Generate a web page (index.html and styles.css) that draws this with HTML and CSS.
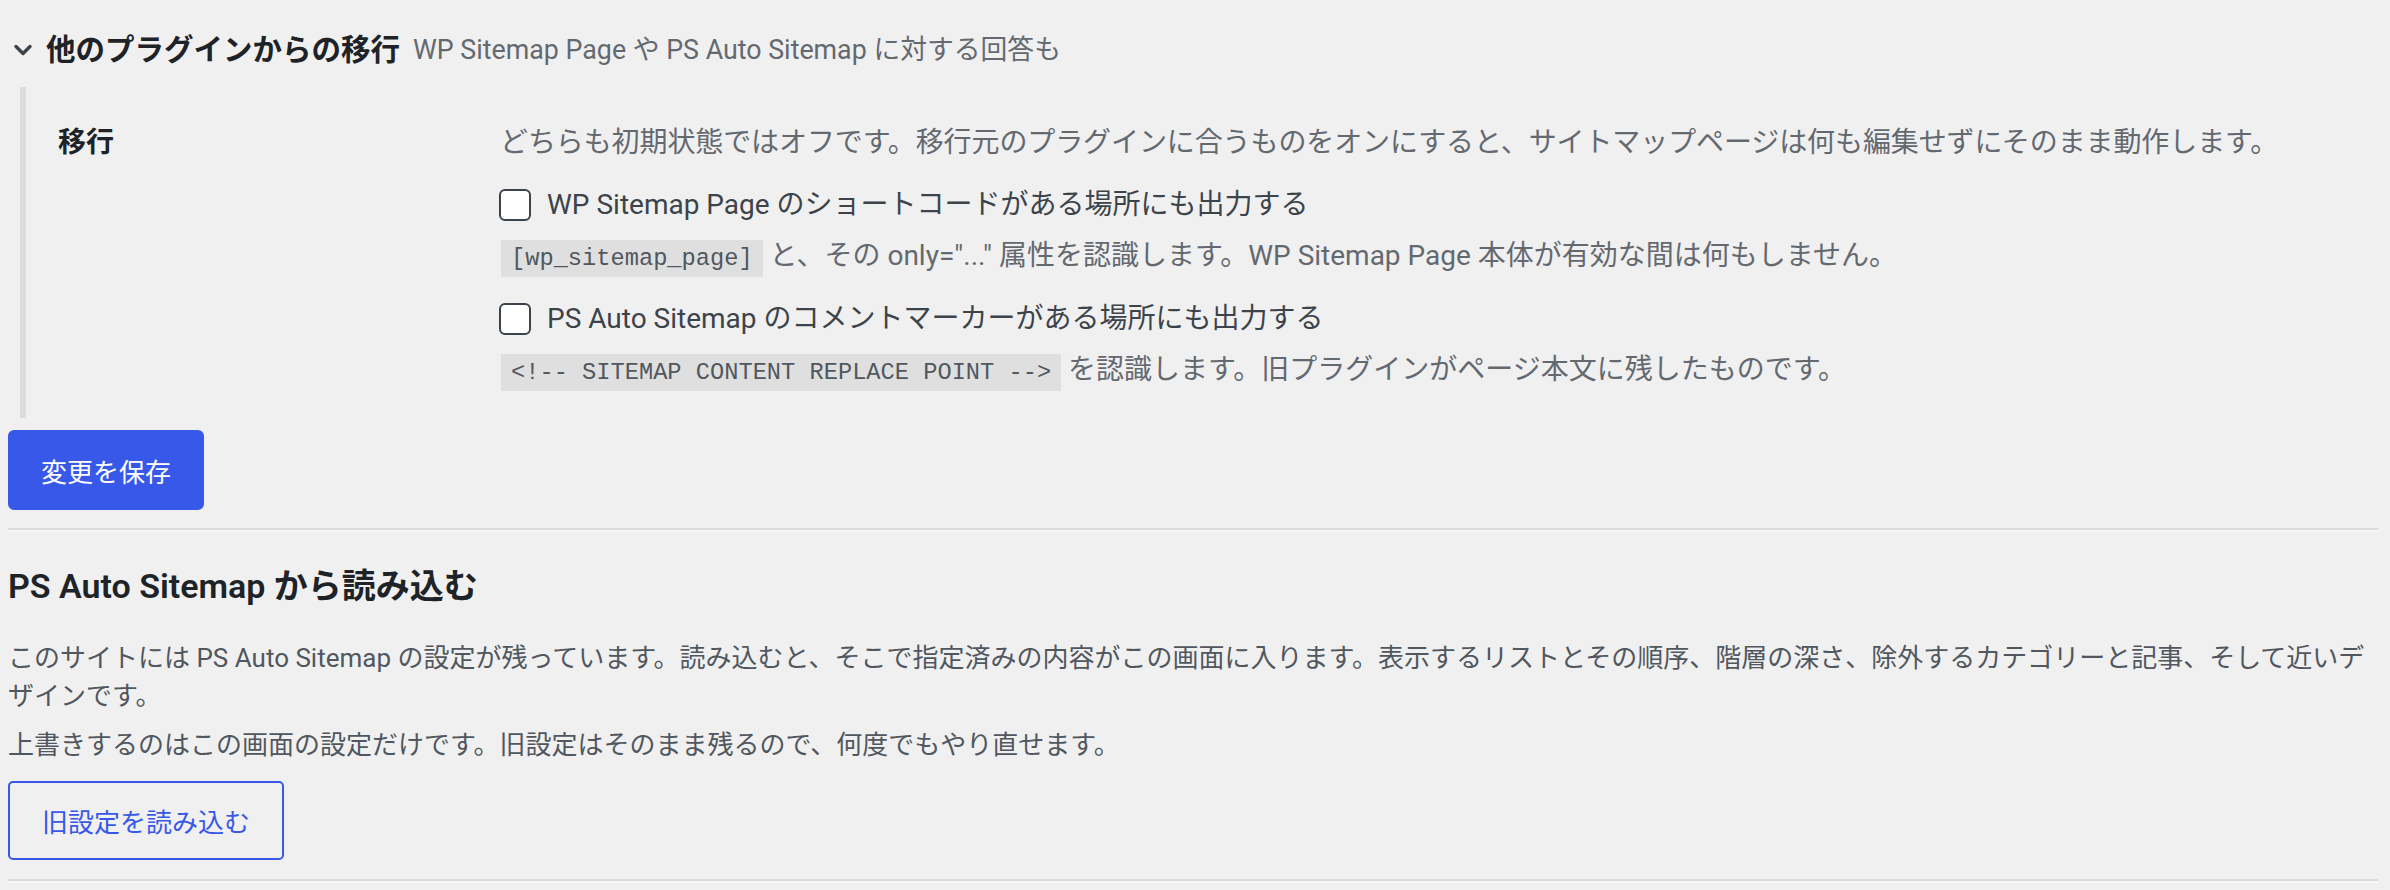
FILE: index.html
```html
<!DOCTYPE html>
<html lang="ja">
<head>
<meta charset="utf-8">
<title>移行設定</title>
<link rel="stylesheet" href="styles.css">
</head>
<body>
<div class="wrap">
  <div class="summary">
    <svg class="chev" width="20" height="14" viewBox="0 0 20 14" aria-hidden="true"><polyline points="3,3.5 10,10.5 17,3.5" fill="none" stroke="#3c434a" stroke-width="3.4" stroke-linecap="round" stroke-linejoin="round"/></svg>
    <span class="summary-title">他のプラグインからの移行</span>
    <span class="summary-sub">WP Sitemap Page や PS Auto Sitemap に対する回答も</span>
  </div>

  <div class="box">
    <div class="th">移行</div>
    <div class="td">
      <p class="desc">どちらも初期状態ではオフです。移行元のプラグインに合うものをオンにすると、サイトマップページは何も編集せずにそのまま動作します。</p>
      <label class="check"><input type="checkbox"><span>WP Sitemap Page のショートコードがある場所にも出力する</span></label>
      <p class="note"><code>[wp_sitemap_page]</code> と、その only="..." 属性を認識します。WP Sitemap Page 本体が有効な間は何もしません。</p>
      <label class="check second"><input type="checkbox"><span>PS Auto Sitemap のコメントマーカーがある場所にも出力する</span></label>
      <p class="note"><code>&lt;!-- SITEMAP CONTENT REPLACE POINT --&gt;</code> を認識します。旧プラグインがページ本文に残したものです。</p>
    </div>
  </div>

  <button class="btn-primary" type="button">変更を保存</button>

  <hr class="sep">

  <h2 class="h2">PS Auto Sitemap から読み込む</h2>
  <p class="para first">このサイトには PS Auto Sitemap の設定が残っています。読み込むと、そこで指定済みの内容がこの画面に入ります。表示するリストとその順序、階層の深さ、除外するカテゴリーと記事、そして近いデザインです。</p>
  <p class="para">上書きするのはこの画面の設定だけです。旧設定はそのまま残るので、何度でもやり直せます。</p>

  <button class="btn-secondary" type="button">旧設定を読み込む</button>

  <hr class="sep bottom">
</div>
</body>
</html>
```

FILE: styles.css
```css
html, body {
  margin: 0;
  padding: 0;
  background: #f0f0f0;
}

body {
  font-family: Roboto, "Noto Sans CJK JP", sans-serif;
  color: #3c434a;
}

.wrap {
  padding: 30px 12px 0 8px;
}

.summary {
  display: flex;
  align-items: center;
  height: 40px;
  padding-left: 5px;
}

.chev {
  display: block;
  flex: none;
  margin-right: 13px;
}

.summary-title {
  font-size: 29.5px;
  font-weight: 700;
  color: #1d2327;
  line-height: 40px;
}

.summary-sub {
  font-size: 26.8px;
  color: #646970;
  line-height: 40px;
  margin-left: 13px;
}

.box {
  margin: 17px 0 0 12px;
  border-left: 6px solid #dcdcde;
  padding: 36px 0 25px 32px;
  display: grid;
  grid-template-columns: 442px 1fr;
}

.th {
  font-size: 28px;
  font-weight: 700;
  color: #1d2327;
  line-height: 40px;
}

.td {
  font-size: 28px;
  line-height: 40px;
}

.desc {
  margin: 0;
  color: #646970;
  letter-spacing: -0.1px;
}

.check {
  display: flex;
  align-items: center;
  margin-top: 22px;
  color: #3c434a;
  height: 40px;
}

.check.second {
  margin-top: 20px;
}

.check input {
  appearance: none;
  -webkit-appearance: none;
  width: 32px;
  height: 32px;
  margin: 0 16px 0 -1px;
  border: 2px solid #3c434a;
  border-radius: 6px;
  background: #fff;
  box-sizing: border-box;
  flex: none;
}

.note {
  margin: 11px 0 0;
  color: #646970;
}

code {
  font-family: "Liberation Mono", "DejaVu Sans Mono", monospace;
  font-size: 23.7px;
  color: #50575e;
  background: rgba(0, 0, 0, 0.07);
  padding: 5px 10px;
  margin-left: 1px;
}

.btn-primary {
  display: block;
  margin-top: 12px;
  height: 80px;
  padding: 0 31px;
  font-family: Roboto, "Noto Sans CJK JP", sans-serif;
  font-size: 26px;
  color: #fff;
  background: #3858e9;
  border: 2px solid #3858e9;
  border-radius: 6px;
}

.sep {
  margin: 18px 0 0;
  height: 0;
  border: 0;
  border-top: 2px solid #dcdcde;
  border-bottom: 2px solid #f6f7f7;
}

.h2 {
  margin: 32px 0 0;
  font-size: 34px;
  font-weight: 600;
  line-height: 44px;
  color: #1d2327;
}

.para {
  margin: 12px 0 0;
  font-size: 26px;
  line-height: 37.5px;
  color: #50575e;
}

.para.first {
  margin-top: 32px;
}

.btn-secondary {
  display: block;
  margin-top: 16px;
  height: 79px;
  padding: 0 32px;
  font-family: Roboto, "Noto Sans CJK JP", sans-serif;
  font-size: 26px;
  color: #3858e9;
  background: transparent;
  border: 2px solid #3858e9;
  border-radius: 5px;
}

.sep.bottom {
  margin-top: 19px;
}
```
